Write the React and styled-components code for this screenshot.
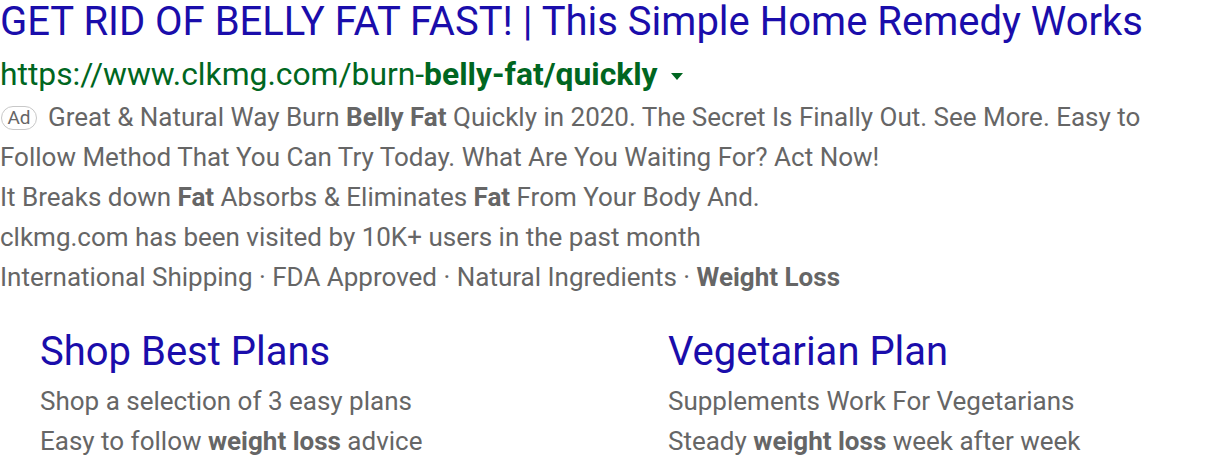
import React from "react";
import styled, { createGlobalStyle } from "styled-components";

const GlobalStyle = createGlobalStyle`
  body {
    margin: 0;
    background: #fff;
    font-family: Roboto, "Liberation Sans", sans-serif;
  }
`;

const AdResult = styled.div`
  display: flex;
  flex-direction: column;
  width: 1216px;
`;

const Title = styled.a`
  color: #1a0dab;
  font-size: 40px;
  line-height: 44px;
  text-decoration: none;
  white-space: nowrap;
`;

const UrlRow = styled.div`
  display: flex;
  align-items: center;
  color: #006621;
  font-size: 31.8px;
  line-height: 44px;
  margin-top: 8px;
`;

const Caret = styled.span`
  width: 0;
  height: 0;
  margin-left: 13px;
  margin-top: 4px;
  border-left: 6.5px solid transparent;
  border-right: 6.5px solid transparent;
  border-top: 7px solid #006621;
`;

const Snippet = styled.div`
  color: #666;
  font-size: 26px;
  line-height: 40px;
  margin-top: 1px;
  white-space: nowrap;

  b {
    font-weight: 700;
  }
`;

const AdBadge = styled.span`
  display: inline-block;
  box-sizing: border-box;
  border: 1px solid #c8c8c8;
  border-radius: 12px;
  padding: 0 4px;
  width: 36px;
  text-align: center;
  font-size: 19px;
  line-height: 22px;
  margin: 0 11px 0 1px;
  vertical-align: 2px;
  color: #666;
`;

const Sitelinks = styled.div`
  display: grid;
  grid-template-columns: 628px 1fr;
  padding-left: 40px;
  margin-top: 33px;
`;

const Sitelink = styled.div`
  display: flex;
  flex-direction: column;
`;

const SitelinkTitle = styled.a`
  color: #1a0dab;
  font-size: 40px;
  line-height: 44px;
  text-decoration: none;
  margin-bottom: 7px;
`;

const SitelinkLine = styled.div`
  color: #666;
  font-size: 26px;
  line-height: 40px;

  b {
    font-weight: 700;
  }
`;

export default function App() {
  return (
    <>
      <GlobalStyle />
      <AdResult>
        <Title>GET RID OF BELLY FAT FAST! | This Simple Home Remedy Works</Title>
        <UrlRow>
          <span>
            https://www.clkmg.com/burn-<b>belly-fat/quickly</b>
          </span>
          <Caret />
        </UrlRow>
        <Snippet>
          <div>
            <AdBadge>Ad</AdBadge>Great &amp; Natural Way Burn <b>Belly Fat</b> Quickly in 2020. The Secret Is
            Finally Out. See More. Easy to
          </div>
          <div>Follow Method That You Can Try Today. What Are You Waiting For? Act Now!</div>
          <div>
            It Breaks down <b>Fat</b> Absorbs &amp; Eliminates <b>Fat</b> From Your Body And.
          </div>
          <div>clkmg.com has been visited by 10K+ users in the past month</div>
          <div>
            International Shipping · FDA Approved · Natural Ingredients · <b>Weight Loss</b>
          </div>
        </Snippet>
        <Sitelinks>
          <Sitelink>
            <SitelinkTitle>Shop Best Plans</SitelinkTitle>
            <SitelinkLine>Shop a selection of 3 easy plans</SitelinkLine>
            <SitelinkLine>
              Easy to follow <b>weight loss</b> advice
            </SitelinkLine>
          </Sitelink>
          <Sitelink>
            <SitelinkTitle>Vegetarian Plan</SitelinkTitle>
            <SitelinkLine>Supplements Work For Vegetarians</SitelinkLine>
            <SitelinkLine>
              Steady <b>weight loss</b> week after week
            </SitelinkLine>
          </Sitelink>
        </Sitelinks>
      </AdResult>
    </>
  );
}
